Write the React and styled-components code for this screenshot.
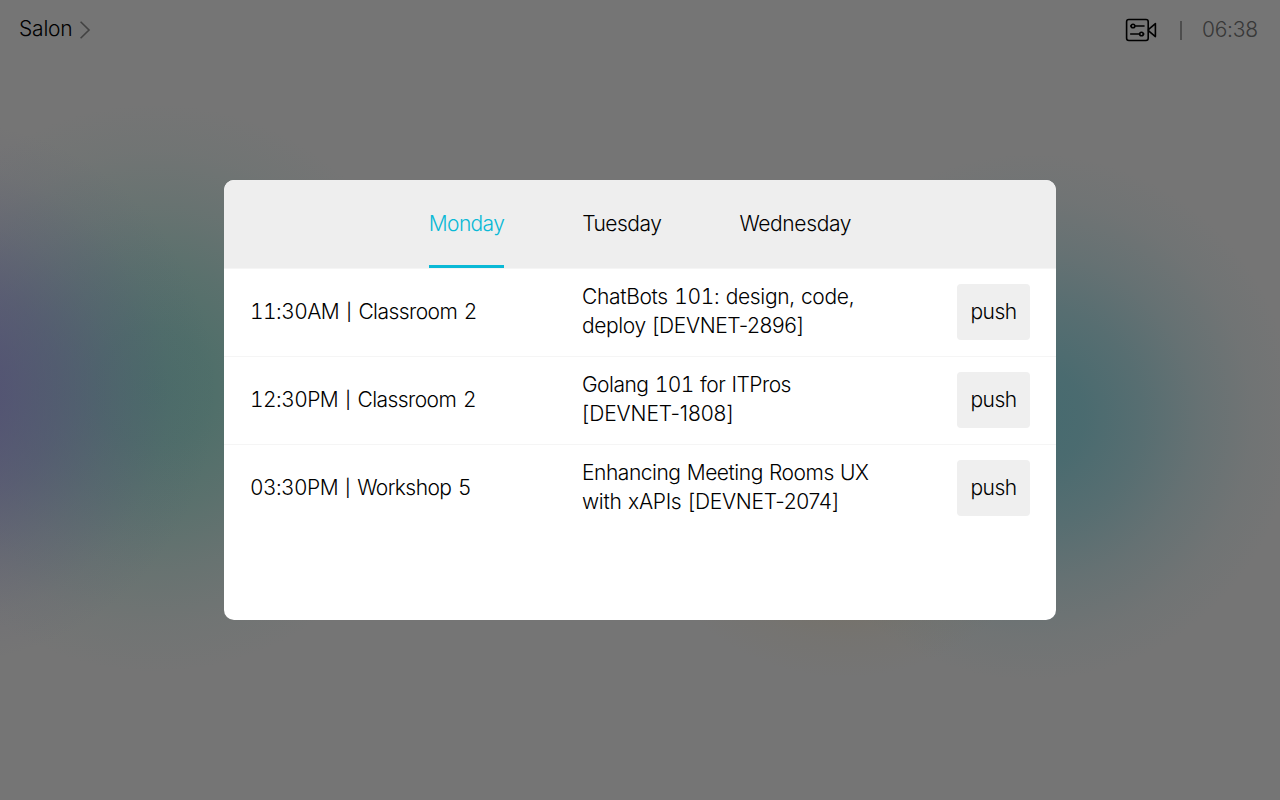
import React from "react";
import styled, { createGlobalStyle } from "styled-components";

const GlobalStyle = createGlobalStyle`
  *, *::before, *::after { box-sizing: border-box; }
  body { margin: 0; overflow: hidden; }
`;

const glow = (x, y, r, rgb, a) =>
  `radial-gradient(circle ${r}px at ${x}px ${y}px, rgba(${rgb}, ${a}) 0%, rgba(${rgb}, ${a * 0.9}) 20%, rgba(${rgb}, ${a * 0.64}) 42%, rgba(${rgb}, ${a * 0.33}) 63%, rgba(${rgb}, ${a * 0.1}) 83%, rgba(${rgb}, 0) 100%)`;

const Screen = styled.div`
  display: flex;
  flex-direction: column;
  width: 100vw;
  height: 100vh;
  font-family: Inter, "Liberation Sans", sans-serif;
  font-weight: 300;
  font-size: 21px;
  color: #000;
  background-color: #757575;
  background-image:
    ${glow(-55, 392, 272, "78, 74, 116", 0.8)},
    ${glow(155, 388, 285, "74, 110, 104", 0.97)},
    ${glow(1032, 417, 264, "70, 106, 111", 1)},
    ${glow(845, 452, 226, "118, 104, 76", 1)};
`;

const TopBar = styled.header`
  display: flex;
  justify-content: space-between;
  align-items: center;
  height: 60px;
  padding: 0 22px 0 19px;
`;

const RoomLink = styled.div`
  display: flex;
  align-items: center;
  gap: 7px;
  letter-spacing: -0.2px;
  line-height: 24px;
  padding-bottom: 2px;
`;

const Chevron = styled.svg`
  display: block;
  margin-top: 1px;
`;

const Status = styled.div`
  display: flex;
  align-items: center;
`;

const Divider = styled.span`
  width: 2px;
  height: 19px;
  margin: 0 20px 0 23px;
  background: #4d4d4d;
`;

const Clock = styled.time`
  color: #383838;
  line-height: 24px;
  letter-spacing: -0.2px;
`;

const Stage = styled.main`
  display: flex;
  justify-content: center;
  padding-top: 120px;
`;

const Panel = styled.section`
  width: 832px;
  height: 440px;
  border-radius: 10px;
  overflow: hidden;
  background: #fff;
`;

const Tabs = styled.nav`
  display: flex;
  justify-content: center;
  gap: 78px;
  height: 88px;
  background: #eee;
`;

const Tab = styled.div`
  height: 88px;
  line-height: 88px;
  white-space: nowrap;
  letter-spacing: ${(p) => p.$tracking}px;
  color: ${(p) => (p.$active ? "#0ab9d6" : "#000")};
  border-bottom: 3px solid ${(p) => (p.$active ? "#0ab9d6" : "transparent")};
`;

const Row = styled.div`
  display: grid;
  grid-template-columns: 332px 1fr 73px;
  align-items: center;
  height: 88px;
  padding: 0 26px 1px;
  border-top: 1px solid #f5f5f5;
`;

const Slot = styled.div`
  line-height: 28px;
  padding-bottom: 1px;
  white-space: nowrap;
  word-spacing: 1.5px;
  font-variant-numeric: tabular-nums;
  letter-spacing: ${(p) => p.$tracking}px;
`;

const Bar = styled.span`
  display: inline-block;
  width: 6px;
  text-align: center;
  font-size: 17px;
  font-weight: 400;
  line-height: 20px;
  vertical-align: 1px;
`;

const Title = styled.div`
  padding-bottom: 2px;
`;

const TitleLine = styled.div`
  line-height: 29px;
  white-space: nowrap;
  word-spacing: 1px;
  font-variant-numeric: ${(p) => (p.$tabular ? "tabular-nums" : "normal")};
  letter-spacing: ${(p) => p.$tracking}px;
`;

const PushButton = styled.button`
  width: 73px;
  height: 56px;
  padding: 0 0 1px;
  border: 0;
  border-radius: 4px;
  background: #efefef;
  color: #000;
  font: inherit;
  letter-spacing: -0.5px;
`;

const days = [
  { name: "Monday", tracking: -0.65 },
  { name: "Tuesday", tracking: -0.5 },
  { name: "Wednesday", tracking: -0.35 },
];

const sessions = [
  {
    time: "11:30AM",
    room: "Classroom 2",
    tracking: -0.55,
    title: [["ChatBots 101: design, code,", -0.32], ["deploy [DEVNET-2896]", -0.4]],
  },
  {
    time: "12:30PM",
    room: "Classroom 2",
    tracking: -0.55,
    title: [["Golang 101 for ITPros", -0.5], ["[DEVNET-1808]", -0.12]],
  },
  {
    time: "03:30PM",
    room: "Workshop 5",
    tracking: -0.58,
    title: [["Enhancing Meeting Rooms UX", -0.47], ["with xAPIs [DEVNET-2074]", -0.3]],
  },
];

function CameraIcon() {
  return (
    <svg width="33" height="24" viewBox="0 0 33 24" fill="none" stroke="#000" strokeWidth="1.6" strokeLinejoin="round" strokeLinecap="round">
      <rect x="2.6" y="1.5" width="21.6" height="21" rx="2.2" />
      <path d="M24.6 11.3 31.4 5.6V18.6L24.6 12.9Z" />
      <circle cx="9" cy="8" r="1.8" />
      <path d="M11 8H20M6.7 8h.4M6.7 16H15.4M19.4 16h.4" />
      <circle cx="17.5" cy="16" r="1.8" />
    </svg>
  );
}

export default function App() {
  return (
    <Screen>
      <GlobalStyle />
      <TopBar>
        <RoomLink>
          <span>Salon</span>
          <Chevron width="11" height="18" viewBox="0 0 11 18" fill="none" stroke="#424242" strokeWidth="1.6">
            <path d="M.6 .8 9 9 .6 17.2" />
          </Chevron>
        </RoomLink>
        <Status>
          <CameraIcon />
          <Divider />
          <Clock>06:38</Clock>
        </Status>
      </TopBar>
      <Stage>
        <Panel>
          <Tabs>
            {days.map((day, i) => (
              <Tab key={day.name} $active={i === 0} $tracking={day.tracking}>{day.name}</Tab>
            ))}
          </Tabs>
          {sessions.map(({ time, room, tracking, title }) => (
            <Row key={time}>
              <Slot $tracking={tracking}>{time} <Bar>|</Bar> {room}</Slot>
              <Title>
                {title.map(([text, lineTracking], i) => (
                  <TitleLine key={text} $tabular={i === 0} $tracking={lineTracking}>{text}</TitleLine>
                ))}
              </Title>
              <PushButton>push</PushButton>
            </Row>
          ))}
        </Panel>
      </Stage>
    </Screen>
  );
}
